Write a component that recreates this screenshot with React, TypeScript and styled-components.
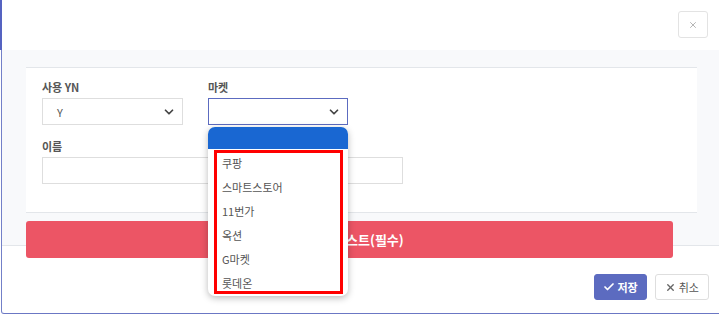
import React from 'react';
import styled, { createGlobalStyle } from 'styled-components';
import { ChevronDown, Check, X } from 'lucide-react';

const GlobalStyle = createGlobalStyle`
  html, body {
    margin: 0;
    padding: 0;
    background: #ffffff;
    overflow: hidden;
  }
  body {
    font-family: "Noto Sans CJK KR", "Noto Sans", sans-serif;
    color: #555;
  }
  * {
    box-sizing: border-box;
  }
`;

const Modal = styled.div`
  margin-left: 1px;
  width: 720px;
  height: 314px;
  border-left: 1px solid #7380c8;
  border-bottom: 1px solid #6b77c4;
  border-bottom-left-radius: 3px;
  background: #fff;
  display: flex;
  flex-direction: column;
  position: relative;
`;

const Header = styled.div`
  height: 50px;
  flex-shrink: 0;
  display: flex;
  justify-content: flex-end;
  align-items: flex-start;
  padding: 11px 13px 0 0;
  box-shadow: -2px 0 0 #5563c1;
`;

const CloseButton = styled.button`
  width: 30px;
  height: 27px;
  border: 1px solid #e3e3e3;
  border-radius: 3px;
  background: #fff;
  display: flex;
  align-items: center;
  justify-content: center;
  padding: 0;
  color: #888;
`;

const Body = styled.div`
  background: #f8f9fb;
  padding: 17px 24px 0 24px;
  height: 195px;
  flex-shrink: 0;
`;

const Card = styled.div`
  background: #fff;
  border-top: 1px solid #e3e6ea;
  border-bottom: 1px solid #e3e6ea;
  height: 146px;
  padding: 12px 16px 0 16px;
  display: flex;
  flex-direction: column;
  gap: 14px;
`;

const Row = styled.div`
  display: flex;
  gap: 25px;
`;

const Field = styled.div<{ $width: number }>`
  width: ${p => p.$width}px;
  display: flex;
  flex-direction: column;
  gap: 3px;
  position: relative;
`;

const Label = styled.div`
  font-size: 11px;
  font-weight: 700;
  line-height: 15px;
  color: #555;
`;

const SelectBox = styled.div<{ $focused?: boolean }>`
  height: 27px;
  border: 1px solid ${p => (p.$focused ? '#5c6bc0' : '#dedede')};
  background: #fff;
  display: flex;
  align-items: center;
  justify-content: space-between;
  padding: 0 6px 0 14px;
  font-size: 11px;
  color: #555;
`;

const TextInput = styled.div`
  height: 27px;
  border: 1px solid #dedede;
  background: #fff;
`;

const Dropdown = styled.div`
  position: absolute;
  top: 47px;
  left: 0;
  width: 140px;
  height: 169px;
  background: #fff;
  border-radius: 7px;
  box-shadow: 0 2px 7px rgba(0, 0, 0, 0.28);
  overflow: hidden;
  z-index: 5;
`;

const HighlightedOption = styled.div`
  height: 22px;
  background: #1967d2;
`;

const OptionList = styled.div`
  margin: 1px 5px 0 6px;
  height: 144px;
  border: 3px solid #ff0000;
  overflow: hidden;
`;

const Option = styled.div`
  height: 24px;
  line-height: 20px;
  padding: 0 0 4px 5px;
  font-size: 11px;
  color: #555;
  white-space: nowrap;
`;

const RequiredButton = styled.button`
  display: block;
  position: relative;
  z-index: 1;
  width: calc(100% - 24px);
  height: 37px;
  margin: 8px 0 -13px 0;
  border: none;
  border-radius: 3px;
  background: #ec5565;
  color: #fff;
  font-family: inherit;
  font-size: 13px;
  font-weight: 700;
`;

const Footer = styled.div`
  flex: 1;
  border-top: 1px solid #e3e6ea;
  display: flex;
  justify-content: flex-end;
  align-items: flex-start;
  gap: 8px;
  padding: 28px 12px 0 0;
`;

const FooterButton = styled.button<{ $primary?: boolean }>`
  height: 26px;
  padding: 0 ${p => (p.$primary ? '8px' : '9px')};
  border-radius: 3px;
  border: 1px solid ${p => (p.$primary ? '#5c6bc0' : '#dedede')};
  background: ${p => (p.$primary ? '#5c6bc0' : '#fff')};
  color: ${p => (p.$primary ? '#fff' : '#555')};
  font-family: inherit;
  font-size: 11px;
  font-weight: ${p => (p.$primary ? 700 : 400)};
  display: flex;
  align-items: center;
  gap: 3px;
`;

const markets = ['쿠팡', '스마트스토어', '11번가', '옥션', 'G마켓', '롯데온'];

export default function App() {
  return (
    <>
      <GlobalStyle />
      <Modal>
        <Header>
          <CloseButton>
            <X size={10} strokeWidth={1.5} />
          </CloseButton>
        </Header>

        <Body>
          <Card>
            <Row>
              <Field $width={141}>
                <Label>사용 YN</Label>
                <SelectBox>
                  Y
                  <ChevronDown size={14} strokeWidth={3} color="#444" />
                </SelectBox>
              </Field>
              <Field $width={140}>
                <Label>마켓</Label>
                <SelectBox $focused>
                  <span />
                  <ChevronDown size={14} strokeWidth={3} color="#444" />
                </SelectBox>
                <Dropdown>
                  <HighlightedOption />
                  <OptionList>
                    {markets.map(m => (
                      <Option key={m}>{m}</Option>
                    ))}
                  </OptionList>
                </Dropdown>
              </Field>
            </Row>
            <Row>
              <Field $width={361}>
                <Label>이름</Label>
                <TextInput />
              </Field>
            </Row>
          </Card>
          <RequiredButton>쇼핑몰 리스트(필수)</RequiredButton>
        </Body>

        <Footer>
          <FooterButton $primary>
            <Check size={12} strokeWidth={3.5} />
            저장
          </FooterButton>
          <FooterButton>
            <X size={11} strokeWidth={3} color="#666" />
            취소
          </FooterButton>
        </Footer>
      </Modal>
    </>
  );
}
